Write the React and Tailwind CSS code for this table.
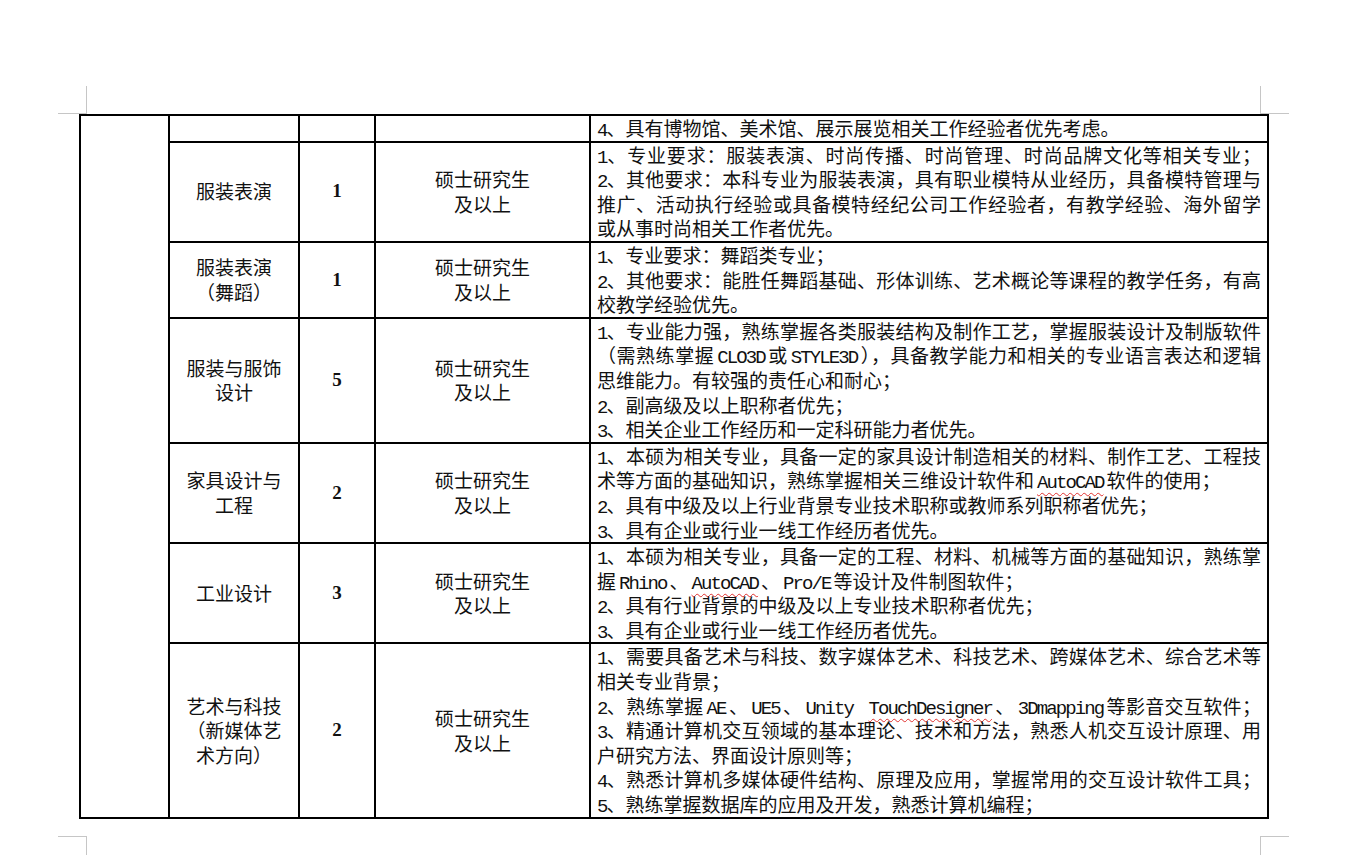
const ROWS = [
  {
    name: [],
    count: '',
    degree: [],
    lines: [{ t: '4、具有博物馆、美术馆、展示展览相关工作经验者优先考虑。' }],
  },
  {
    name: ['服装表演'],
    count: '1',
    degree: ['硕士研究生', '及以上'],
    lines: [
      { t: '1、专业要求：服装表演、时尚传播、时尚管理、时尚品牌文化等相关专业；', j: true },
      { t: '2、其他要求：本科专业为服装表演，具有职业模特从业经历，具备模特管理与', j: true },
      { t: '推广、活动执行经验或具备模特经纪公司工作经验者，有教学经验、海外留学', j: true },
      { t: '或从事时尚相关工作者优先。' },
    ],
  },
  {
    name: ['服装表演', '（舞蹈）'],
    count: '1',
    degree: ['硕士研究生', '及以上'],
    lines: [
      { t: '1、专业要求：舞蹈类专业；' },
      { t: '2、其他要求：能胜任舞蹈基础、形体训练、艺术概论等课程的教学任务，有高', j: true },
      { t: '校教学经验优先。' },
    ],
  },
  {
    name: ['服装与服饰', '设计'],
    count: '5',
    degree: ['硕士研究生', '及以上'],
    lines: [
      { t: '1、专业能力强，熟练掌握各类服装结构及制作工艺，掌握服装设计及制版软件', j: true },
      { t: '（需熟练掌握CLO3D或STYLE3D），具备教学能力和相关的专业语言表达和逻辑', j: true },
      { t: '思维能力。有较强的责任心和耐心；' },
      { t: '2、副高级及以上职称者优先；' },
      { t: '3、相关企业工作经历和一定科研能力者优先。' },
    ],
  },
  {
    name: ['家具设计与', '工程'],
    count: '2',
    degree: ['硕士研究生', '及以上'],
    lines: [
      { t: '1、本硕为相关专业，具备一定的家具设计制造相关的材料、制作工艺、工程技', j: true },
      { t: '术等方面的基础知识，熟练掌握相关三维设计软件和~AutoCAD~软件的使用；' },
      { t: '2、具有中级及以上行业背景专业技术职称或教师系列职称者优先；' },
      { t: '3、具有企业或行业一线工作经历者优先。' },
    ],
  },
  {
    name: ['工业设计'],
    count: '3',
    degree: ['硕士研究生', '及以上'],
    lines: [
      { t: '1、本硕为相关专业，具备一定的工程、材料、机械等方面的基础知识，熟练掌', j: true },
      { t: '握Rhino、~AutoCAD~、Pro/E等设计及件制图软件；' },
      { t: '2、具有行业背景的中级及以上专业技术职称者优先；' },
      { t: '3、具有企业或行业一线工作经历者优先。' },
    ],
  },
  {
    name: ['艺术与科技', '（新媒体艺', '术方向）'],
    count: '2',
    degree: ['硕士研究生', '及以上'],
    lines: [
      { t: '1、需要具备艺术与科技、数字媒体艺术、科技艺术、跨媒体艺术、综合艺术等', j: true },
      { t: '相关专业背景；' },
      { t: '2、熟练掌握AE、UE5、Unity\u00a0~TouchDesigner~、3Dmapping等影音交互软件；', j: true },
      { t: '3、精通计算机交互领域的基本理论、技术和方法，熟悉人机交互设计原理、用', j: true },
      { t: '户研究方法、界面设计原则等；' },
      { t: '4、熟悉计算机多媒体硬件结构、原理及应用，掌握常用的交互设计软件工具；', j: true },
      { t: '5、熟练掌握数据库的应用及开发，熟悉计算机编程；' },
    ],
  },
]

const LATIN = /^[\x20-\x7e\u00a0]+$/
const SQUIGGLE = 'underline decoration-wavy decoration-[#e0312f] decoration-1 underline-offset-[4px]'

// latin runs: narrow half-width face, kept whole (inline-block) so justify spreads the CJK
// ~word~ gets the spell-check squiggle
function Rich({ text }) {
  return text.split('~').map((part, i) =>
    part
      .split(/([\x20-\x7e\u00a0]+)/)
      .filter(Boolean)
      .map((r, k) =>
        LATIN.test(r) ? (
          <span
            key={`${i}-${k}`}
            className={`inline-block font-['Liberation_Mono'] leading-none tracking-[-1.9px] ${r.length > 1 ? 'mx-[3px]' : ''} ${i % 2 ? SQUIGGLE : ''}`}
          >
            {r}
          </span>
        ) : (
          <span key={`${i}-${k}`}>{r}</span>
        )
      )
  )
}

function Mark({ side, top }) {
  const cls = top
    ? side === 'left' ? 'border-r border-b' : 'border-l border-b'
    : side === 'left' ? 'border-r border-t' : 'border-l border-t'
  return <div className={`h-[28px] w-[29px] border-[#c6c6c6] ${cls}`} />
}

const cell = 'border-r-2 border-b-2 border-black'
const line = 'h-[24.6px] whitespace-nowrap'

export default function App() {
  return (
    <div className="min-h-screen bg-white pt-[86px] font-['Noto_Sans_CJK_SC',sans-serif] text-[19px] leading-[24.6px] text-[#111]">
      <div className="flex justify-between pl-[58px] pr-[56px]">
        <Mark side="left" top />
        <Mark side="right" top />
      </div>

      <table className="ml-[79px] w-[1190px] table-fixed border-separate border-spacing-0 border-t-2 border-l-2 border-black">
        <colgroup>
          <col className="w-[89px]" />
          <col className="w-[130px]" />
          <col className="w-[76px]" />
          <col className="w-[215px]" />
          <col className="w-[678px]" />
        </colgroup>
        <tbody>
          {ROWS.map((r, i) => (
            <tr key={i}>
              {i === 0 && <td rowSpan={ROWS.length} className={cell} />}
              <td className={`${cell} text-center align-middle`}>
                {r.name.map((n) => (
                  <div key={n} className={line}>{n}</div>
                ))}
              </td>
              <td className={`${cell} text-center align-middle font-['Liberation_Serif'] font-bold`}>
                <div className={line}>{r.count}</div>
              </td>
              <td className={`${cell} text-center align-middle`}>
                {r.degree.map((d) => (
                  <div key={d} className={line}>{d}</div>
                ))}
              </td>
              <td className={`${cell} px-[6px] align-top`}>
                {r.lines.map((l, k) => (
                  <div
                    key={k}
                    className={`h-[24.6px] ${l.j ? 'text-justify [text-align-last:justify]' : 'whitespace-nowrap'}`}
                  >
                    <Rich text={l.t} />
                  </div>
                ))}
              </td>
            </tr>
          ))}
        </tbody>
      </table>

      <div className="mt-[17px] flex justify-between pl-[58px] pr-[56px]">
        <Mark side="left" />
        <Mark side="right" />
      </div>
    </div>
  )
}
